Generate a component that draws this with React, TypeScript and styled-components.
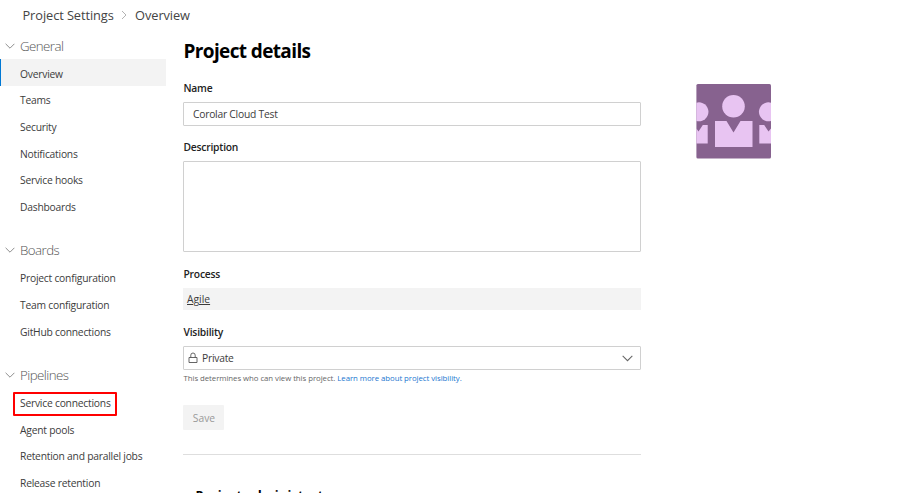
import React from 'react';
import styled, { createGlobalStyle } from 'styled-components';

const Global = createGlobalStyle`
  * { box-sizing: border-box; }
  html, body { margin: 0; background: #fff; overflow: hidden; }
  body { font-family: "Open Sans", "Noto Sans", sans-serif; color: #3c3c3c; }
`;

const Page = styled.div`
  height: 493px;
  display: flex;
  flex-direction: column;
  overflow: hidden;
`;

const Breadcrumb = styled.header`
  flex: 0 0 32.7px;
  display: flex;
  align-items: center;
  gap: 7.7px;
  padding: 0 0 2px 22.5px;
  font-size: 12.8px;
  letter-spacing: -0.08px;
  color: #444;
`;

const Body = styled.div`
  flex: 1;
  min-height: 0;
  display: flex;
`;

const Sidebar = styled.nav`
  width: 166px;
  flex: none;
  display: flex;
  flex-direction: column;
  gap: 18px;
`;

const GroupTitle = styled.div`
  height: 26.7px;
  display: flex;
  align-items: center;
  gap: 5px;
  padding-left: 5px;
  padding-bottom: 1px;
  font-size: 13.3px;
  font-weight: 300;
  letter-spacing: -0.55px;
  color: #555;
`;

const NavItem = styled.a<{ $selected?: boolean }>`
  height: 26.7px;
  display: flex;
  align-items: center;
  padding-top: 1.6px;
  padding-left: ${(p) => (p.$selected ? '19px' : '20px')};
  border-left: ${(p) => (p.$selected ? '1px solid #0078d4' : 'none')};
  background: ${(p) => (p.$selected ? '#f3f3f3' : 'transparent')};
  font-size: 10.3px;
  letter-spacing: -0.23px;
  white-space: nowrap;
`;

const Marked = styled.span`
  height: 24px;
  margin: 1px 0 0 -7px;
  padding: 0 4.5px 1px 5px;
  border: 2px solid #f00;
  border-radius: 1px;
  display: flex;
  align-items: center;
  line-height: 1;
`;

const Main = styled.main`
  width: 458px;
  margin-left: 17px;
  flex: none;
  display: flex;
  flex-direction: column;
  & > * { flex-shrink: 0; }
`;

const Title = styled.h1`
  margin: 4.3px 0 0;
  height: 28px;
  line-height: 28px;
  font-size: 19px;
  font-weight: 700;
  letter-spacing: -0.63px;
  padding-left: 0.5px;
  color: #000;
`;

const Label = styled.label<{ $top: number }>`
  height: 20px;
  margin-top: ${(p) => p.$top}px;
  line-height: 20px;
  font-size: 10.3px;
  font-weight: 600;
  letter-spacing: -0.22px;
  padding-left: 0.5px;
  color: #222;
`;

const Field = styled.div<{ $height: number; $top: number }>`
  height: ${(p) => p.$height}px;
  margin-top: ${(p) => p.$top}px;
  display: flex;
  align-items: center;
  padding: 0 9px;
  border: 1px solid #d0d0d0;
  border-radius: 1px;
  font-size: 10.3px;
  letter-spacing: -0.24px;
`;

const Select = styled(Field)`
  padding: 0 7px 0 4px;
  gap: 4px;
  & > span { flex: 1; }
`;

const Process = styled.div`
  height: 22px;
  margin-top: 4px;
  padding-left: 4px;
  line-height: 22px;
  background: #f3f3f3;
  font-size: 10.3px;
  text-decoration: underline;
`;

const Hint = styled.p`
  height: 14px;
  margin: 1px 0 0;
  padding-left: 0.5px;
  line-height: 14px;
  font-size: 7.8px;
  letter-spacing: -0.05px;
  color: #666;
  white-space: nowrap;
  & a { color: #1a76d0; }
`;

const Save = styled.button`
  width: 41px;
  height: 25px;
  margin: 20px 0 0;
  padding: 0 0 0 1px;
  border: 0;
  border-radius: 1px;
  background: #f3f3f3;
  color: #999;
  font: 10.3px "Open Sans", sans-serif;
`;

const Divider = styled.hr`
  width: 100%;
  height: 1px;
  margin: 24px 0 0;
  border: 0;
  background: #dedede;
`;

const SectionTitle = styled.h2`
  margin: 30px 0 0 12.5px;
  height: 22px;
  line-height: 22px;
  font-size: 12.6px;
  font-weight: 700;
  letter-spacing: 0.3px;
  color: #000;
`;

const Avatar = styled.svg`
  width: 75px;
  height: 75px;
  margin: 51px 0 0 55.3px;
  flex: none;
`;

const Chevron = ({ width = 10, color = '#888' }: { width?: number; color?: string }) => (
  <svg width={width} height={width * 0.6} viewBox="0 0 10 6" fill="none" stroke={color} strokeWidth="0.95">
    <path d="M.6.8 5 5.2 9.4.8" />
  </svg>
);

const groups = [
  { title: 'General', items: ['Overview', 'Teams', 'Security', 'Notifications', 'Service hooks', 'Dashboards'] },
  { title: 'Boards', items: ['Project configuration', 'Team configuration', 'GitHub connections'] },
  { title: 'Pipelines', items: ['Service connections', 'Agent pools', 'Retention and parallel jobs', 'Release retention'] },
];

export default function App() {
  return (
    <Page>
      <Global />
      <Breadcrumb>
        <span>Project Settings</span>
        <svg width="6" height="10" viewBox="0 0 6 10" fill="none" stroke="#aaa" strokeWidth="0.9">
          <path d="M1 1 5 5 1 9" />
        </svg>
        <span>Overview</span>
      </Breadcrumb>
      <Body>
        <Sidebar>
          {groups.map((g) => (
            <div key={g.title}>
              <GroupTitle>
                <Chevron />
                {g.title}
              </GroupTitle>
              {g.items.map((item) => (
                <NavItem key={item} $selected={item === 'Overview'}>
                  {item === 'Service connections' ? <Marked>{item}</Marked> : item}
                </NavItem>
              ))}
            </div>
          ))}
        </Sidebar>
        <Main>
          <Title>Project details</Title>
          <Label $top={13}>Name</Label>
          <Field $height={24} $top={4}>Corolar Cloud Test</Field>
          <Label $top={11.5}>Description</Label>
          <Field $height={91} $top={4} />
          <Label $top={12}>Process</Label>
          <Process>Agile</Process>
          <Label $top={12}>Visibility</Label>
          <Select $height={24} $top={4}>
            <svg width="10" height="12" viewBox="0 0 10 12" fill="none" stroke="#555" strokeWidth="0.9">
              <path d="M1 5.5h8v5h-8zM2.800 5.500V3.200a2.200 2.200 0 0 1 4.400 0v2.300" />
            </svg>
            <span>Private</span>
            <Chevron width={11} color="#666" />
          </Select>
          <Hint>
            This determines who can view this project. <a>Learn more about project visibility.</a>
          </Hint>
          <Save>Save</Save>
          <Divider />
          <SectionTitle>Project administrators</SectionTitle>
        </Main>
        <Avatar viewBox="0 0 75 75">
          <rect x="0.400" width="74.600" height="74.500" rx="1.500" fill="#87628f" />
          <g fill="#e8c4f2">
            <circle cx="37.500" cy="22.300" r="11.300" />
            <path d="M19 37h11.500l7 11.500 7-11.500H56.500v26H19z" />
            <path d="M.4 18.700A9.500 9.500 0 1 1 .4 37z" />
            <path d="M.4 44.500 2.500 47.500 6.800 41H11.700v18.500H.4z" />
            <path d="M75 18.700A9.500 9.500 0 1 0 75 37z" />
            <path d="M75 44.500 72.500 47.500 68.200 41H63.300v18.500H75z" />
          </g>
        </Avatar>
      </Body>
    </Page>
  );
}
